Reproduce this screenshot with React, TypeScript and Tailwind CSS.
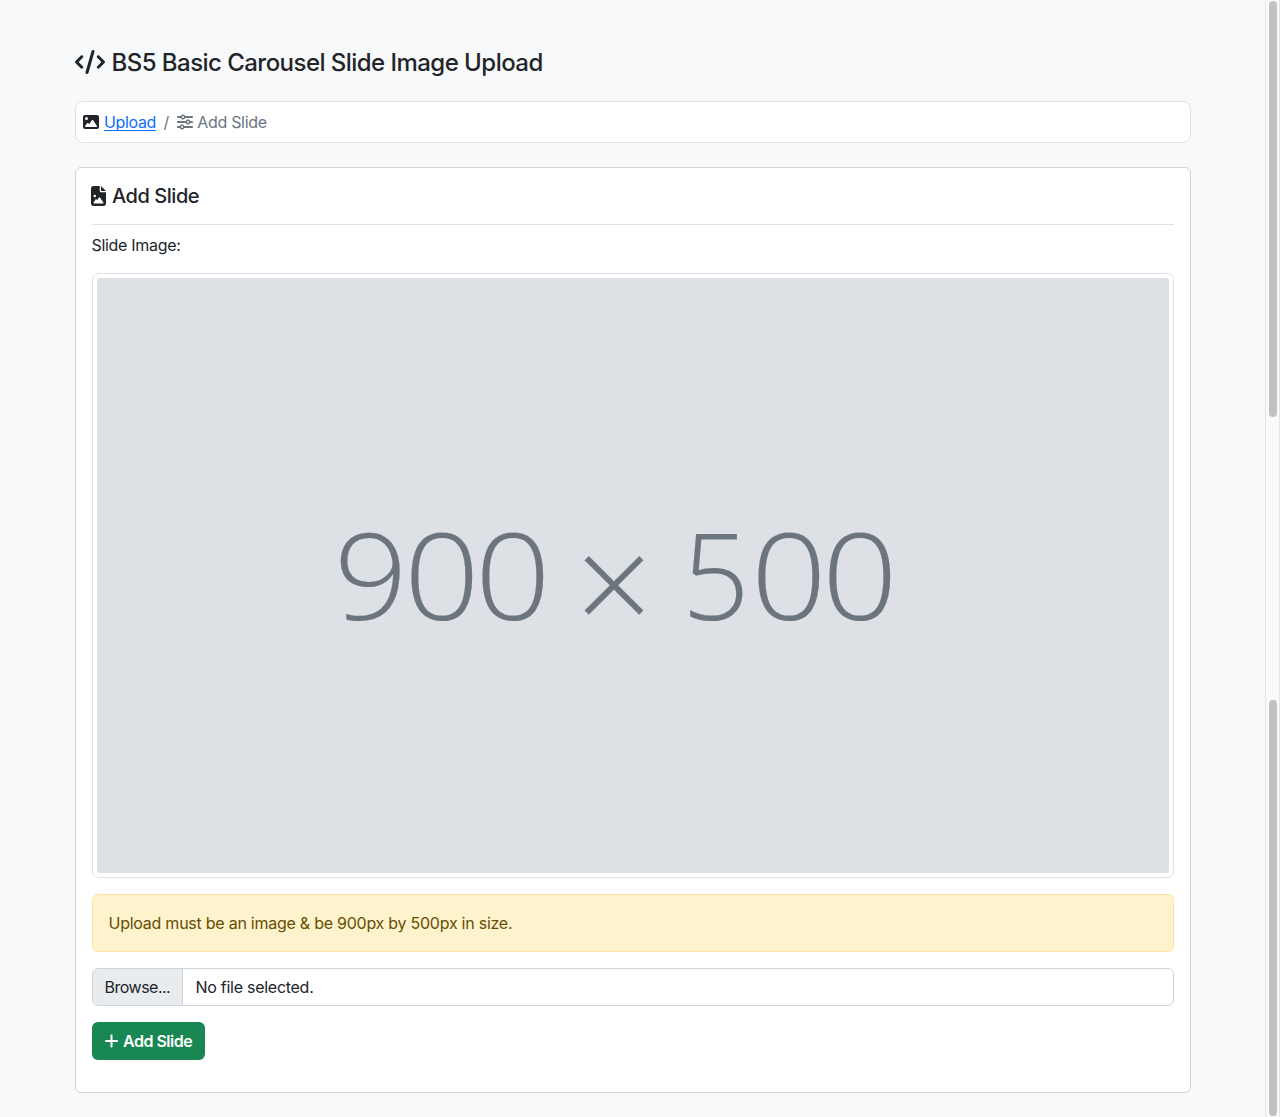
import { FaCode, FaFileImage, FaImage, FaPlus, FaSliders } from "react-icons/fa6";

function Scrollbar() {
  return (
    <aside className="flex h-[1117px] w-[15px] shrink-0 flex-col items-center border-x border-[#e4e5e7] bg-[#fafafa] pt-px">
      <div className="h-[416px] w-2 rounded-full bg-[#c1c1c1]" />
      <div className="mt-[283px] h-[416px] w-2 rounded-full bg-[#c1c1c1]" />
    </aside>
  );
}

function Placeholder() {
  return (
    <div className="flex h-[595px] rounded-[3px] bg-[#dde1e6] pt-[211px] pl-[237px] font-['Open_Sans',sans-serif] text-[119.6px] leading-[170px] font-light whitespace-nowrap text-[#6c757d] [-webkit-text-stroke:0.2px_#6c757d]">
      <span className="w-[70px] origin-left scale-x-[1.08]">9</span>
      <span className="w-[71.4px] origin-left scale-x-[1.11]">0</span>
      <span className="w-[100.2px] origin-left scale-x-[1.11]">0</span>
      <span className="w-[106.2px] translate-y-[7px] text-[135px]">×</span>
      <span className="w-[69px] origin-left scale-x-[0.99]">5</span>
      <span className="w-[71px] origin-left scale-x-[1.11]">0</span>
      <span className="w-[71px] origin-left scale-x-[1.11]">0</span>
    </div>
  );
}

export default function App() {
  return (
    <div className="flex h-[1117px] w-[1280px] overflow-hidden bg-[#f8f9fa] font-[Inter,sans-serif] text-base text-[#212529]">
      <main className="w-[1265px] pt-12 pr-[74px] pl-[75px]">
        <h1 className="flex h-[29px] items-center text-2xl font-medium whitespace-nowrap">
          <FaCode className="-mt-[2px] -ml-[0.5px] h-6 w-[30px] shrink-0" />
          <span className="ml-[7px] tracking-[-0.54px]">BS5 Basic Carousel Slide Image Upload</span>
        </h1>

        <nav className="mt-6 flex h-[42px] items-center rounded-lg border border-[#dee2e6] bg-white px-[7px] whitespace-nowrap">
          <FaImage className="size-4" />
          <a href="#" className="ml-[5px] tracking-[-0.35px] text-[#0d6efd] underline underline-offset-2 [text-decoration-skip-ink:none]">Upload</a>
          <span className="ml-[7.5px] text-[#6c757d]">/</span>
          <FaSliders className="ml-[7.5px] size-4 text-[#6c757d]" />
          <span className="ml-[4.5px] tracking-[-0.32px] text-[#6c757d]">Add Slide</span>
        </nav>

        <section className="mt-6 h-[926px] rounded-md border border-[#d0d1d2] bg-white px-4 pt-4">
          <h2 className="flex h-6 items-center text-xl font-medium whitespace-nowrap">
            <FaFileImage className="-mt-px -ml-px h-5 w-[15px]" />
            <span className="ml-[6px] tracking-[-0.45px]">Add Slide</span>
          </h2>
          <hr className="mt-4 border-[#dee2e6]" />
          <p className="mt-2 -ml-[0.5px] h-6 leading-6 tracking-[-0.3px]">Slide Image:</p>

          <div className="mt-4 h-[605px] rounded-md border border-[#dee2e6] bg-white p-1">
            <Placeholder />
          </div>

          <div className="mt-4 flex h-[58px] items-center rounded-md border border-[#ffe69c] bg-[#fff3cd] px-4 text-[#664d03]">
            <span className="-ml-[0.5px] tracking-[-0.25px]">Upload must be an image &amp; be 900px by 500px in size.</span>
          </div>

          <label className="mt-4 flex h-[38px] items-stretch overflow-hidden rounded-md border border-[#ced4da] leading-9 whitespace-nowrap">
            <span className="w-[90px] border-r border-[#ced4da] bg-[#e9ecef] pl-[11.5px] tracking-[-0.5px]">Browse...</span>
            <span className="pl-[12.5px] tracking-[-0.27px]">No file selected.</span>
          </label>

          <button className="mt-4 flex h-[38px] w-[113px] items-center rounded-md bg-[#198754] pl-3 font-semibold whitespace-nowrap text-white">
            <FaPlus className="h-4 w-[15px]" />
            <span className="ml-[4px] tracking-[-0.5px]">Add Slide</span>
          </button>
        </section>
      </main>
      <Scrollbar />
    </div>
  );
}
